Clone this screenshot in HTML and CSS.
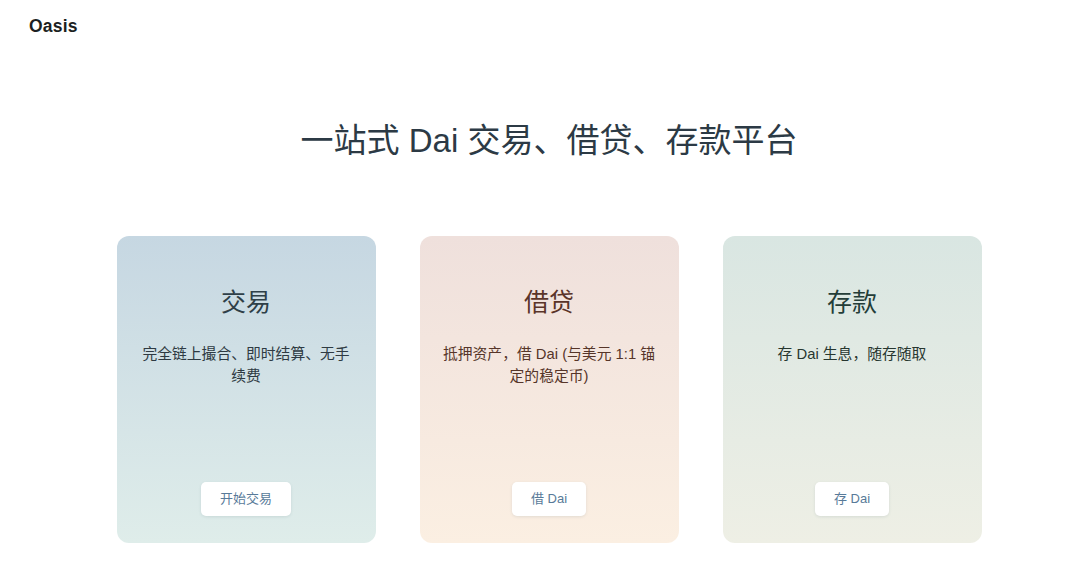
FILE: index.html
```html
<!DOCTYPE html>
<html lang="zh-CN">
<head>
<meta charset="utf-8">
<title>Oasis</title>
<link rel="stylesheet" href="styles.css">
</head>
<body>
<header class="topbar">
  <div class="logo">Oasis</div>
</header>
<main class="main">
  <h1 class="headline">一站式 Dai 交易、借贷、存款平台</h1>
  <div class="cards">
    <section class="card card-trade">
      <h2 class="card-title">交易</h2>
      <p class="card-desc">完全链上撮合、即时结算、无手续费</p>
      <a class="card-btn">开始交易</a>
    </section>
    <section class="card card-borrow">
      <h2 class="card-title">借贷</h2>
      <p class="card-desc">抵押资产，借 Dai (与美元 1:1 锚定的稳定币)</p>
      <a class="card-btn">借 Dai</a>
    </section>
    <section class="card card-save">
      <h2 class="card-title">存款</h2>
      <p class="card-desc">存 Dai 生息，随存随取</p>
      <a class="card-btn">存 Dai</a>
    </section>
  </div>
</main>
</body>
</html>
```
FILE: styles.css
```css
* { box-sizing: border-box; }
html, body {
  margin: 0;
  padding: 0;
  background: #ffffff;
  font-family: "Liberation Sans", "Noto Sans CJK SC", sans-serif;
  color: #2c3a44;
}
.topbar {
  height: 50px;
  padding: 15px 29px 0;
}
.logo {
  font-size: 17.5px;
  font-weight: 700;
  line-height: 22px;
  color: #1c1f22;
  letter-spacing: 0.2px;
}
.main {
  display: flex;
  flex-direction: column;
  align-items: center;
  padding-left: 18px;
}
.headline {
  margin: 68px 0 0;
  font-size: 33px;
  font-weight: 400;
  line-height: 46px;
  color: #2c3a45;
}
.cards {
  display: flex;
  gap: 44px;
  margin-top: 72px;
}
.card {
  width: 259px;
  height: 307px;
  border-radius: 12px;
  padding: 50px 20px 27px;
  display: flex;
  flex-direction: column;
  align-items: center;
  text-align: center;
}
.card-trade { background: linear-gradient(180deg, #c6d7e2 0%, #dfedea 100%); color: #2f3f48; }
.card-borrow { background: linear-gradient(180deg, #efe0dc 0%, #fbefe2 100%); color: #5a3429; }
.card-save { background: linear-gradient(180deg, #d9e6e2 0%, #eeefe5 100%); color: #243d38; }
.card-title {
  margin: 0;
  font-size: 25px;
  font-weight: 400;
  line-height: 32px;
}
.card-desc {
  margin: 25px 0 0;
  font-size: 14.8px;
  line-height: 22px;
}
.card-trade .card-desc { color: #2e3a42; }
.card-borrow .card-desc { color: #563529; }
.card-save .card-desc { color: #27362f; }
.card-btn {
  margin-top: auto;
  height: 34px;
  line-height: 34px;
  padding: 0 19px;
  background: #ffffff;
  border-radius: 5px;
  font-size: 13px;
  color: #587a99;
  box-shadow: 0 1px 3px rgba(60, 90, 100, 0.12);
  cursor: pointer;
}
```
